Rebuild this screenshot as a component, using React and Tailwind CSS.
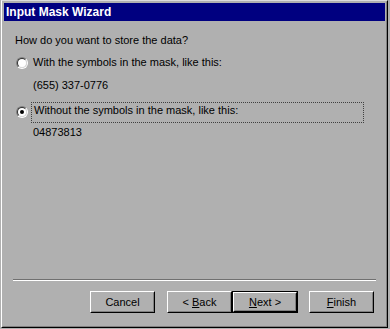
import React, { useState } from 'react';

const font = { fontFamily: '"Liberation Sans", Arial, sans-serif' };

function Radio({ checked }) {
  return (
    <span className="inline-flex w-[12px] h-[12px] shrink-0 rounded-full border border-t-[#808080] border-l-[#808080] border-b-white border-r-white">
      <span className="flex-1 flex items-center justify-center rounded-full border border-t-[#303030] border-l-[#303030] border-b-[#d8d8d8] border-r-[#d8d8d8] bg-white">
        {checked && <span className="w-[4px] h-[4px] rounded-full bg-black" />}
      </span>
    </span>
  );
}

function Button({ children, isDefault }) {
  const face = (
    <div className="h-full border border-t-white border-l-white border-b-black border-r-black">
      <div className="h-full flex items-center justify-center whitespace-pre border border-t-transparent border-l-transparent border-b-[#808080] border-r-[#808080] text-[11px] text-black">
        {children}
      </div>
    </div>
  );
  if (isDefault) {
    return <div className="w-[66px] h-[22px] border border-black">{face}</div>;
  }
  return <div className="w-[65px] h-[22px]">{face}</div>;
}

export default function App() {
  const [choice, setChoice] = useState(1);

  return (
    <div className="w-[390px] h-[329px] bg-[#b0b0b0] overflow-hidden" style={font}>
      <div className="ml-[1px] w-[387px] h-[328px] border border-t-[#dcdcdc] border-l-white border-r-black border-b-black">
        <div className="h-full flex flex-col p-[1px] border border-t-transparent border-l-transparent border-r-[#808080] border-b-[#808080]">
          {/* Title bar */}
          <div className="h-[18px] bg-[#000080] flex items-center pl-[2px]">
            <span className="text-white font-bold text-[12px] leading-none">Input Mask Wizard</span>
          </div>

          {/* Body */}
          <div className="pl-[11px] text-[11px] leading-[13px] text-black">
            <div className="mt-[13px]">How do you want to store the data?</div>

            <div className="mt-[9px] flex items-center ml-[1px] gap-[5px]" onClick={() => setChoice(0)}>
              <Radio checked={choice === 0} />
              <span>With the symbols in the mask, like this:</span>
            </div>
            <div className="mt-[10px] ml-[18px]">(655) 337-0776</div>

            <div className="mt-[10px] flex items-start ml-[1px]" onClick={() => setChoice(1)}>
              <span className="mt-[2px]">
                <Radio checked={choice === 1} />
              </span>
              <div className="ml-[3px] w-[333px] h-[21px] border border-dotted border-[#404040] pl-[2px] pt-[1px]">
                Without the symbols in the mask, like this:
              </div>
            </div>
            <div className="mt-[3px] ml-[18px]">04873813</div>
          </div>

          {/* Separator + buttons */}
          <div className="mt-auto pb-[12px]">
            <div className="ml-[9px] w-[363px] border-t border-t-[#707070] border-b border-b-white" />
            <div className="mt-[10px] flex items-center pl-[86px]">
              <Button>Cancel</Button>
              <div className="ml-[12px] flex">
                <Button>{'< '}<u>B</u>ack</Button>
                <Button isDefault><u>N</u>ext{' >'}</Button>
              </div>
              <div className="ml-[11px]">
                <Button><u>F</u>inish</Button>
              </div>
            </div>
          </div>
        </div>
      </div>
    </div>
  );
}
